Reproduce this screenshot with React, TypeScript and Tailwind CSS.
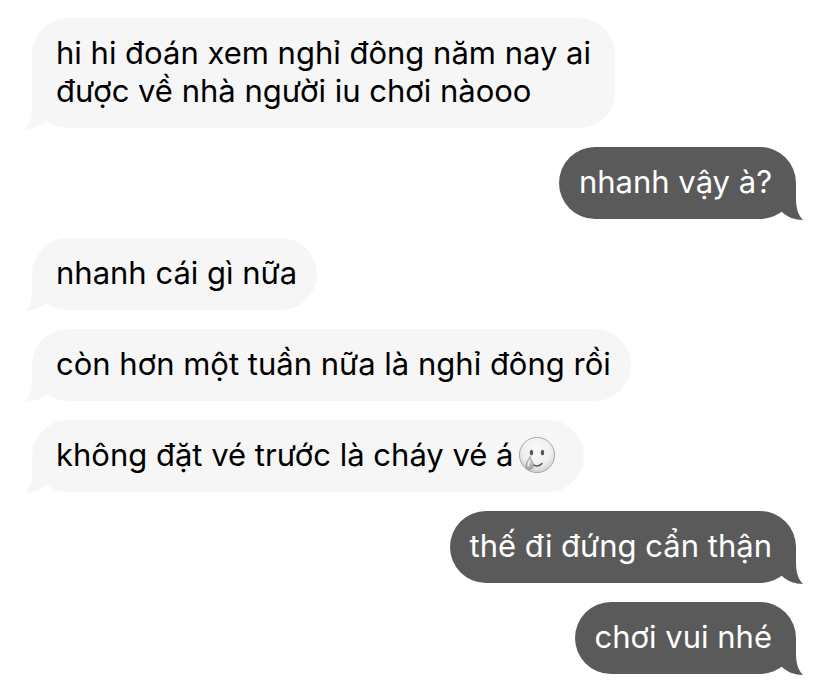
import type { ReactNode } from "react";

type Side = "left" | "right";

function Tail({ side }: { side: Side }) {
  return (
    <svg
      aria-hidden="true"
      viewBox="0 0 44 37"
      className={
        side === "left"
          ? "absolute -left-2 -bottom-px h-[37px] w-11 -scale-x-100 text-[#f6f6f6]"
          : "absolute -right-2 -bottom-px h-[37px] w-11 text-[#5a5a5a]"
      }
    >
      <path
        fill="currentColor"
        d="M14 0H36V15C36 25 38 32 43 37C35 37 27 34 22 29L14 20Z"
      />
    </svg>
  );
}

function Bubble({ side, children }: { side: Side; children: ReactNode }) {
  return (
    <li
      className={
        side === "left"
          ? "relative max-w-full self-start rounded-[36px] bg-[#f6f6f6] pt-4 pb-[18px] pl-6 pr-5 text-black"
          : "relative max-w-full self-end rounded-[36px] bg-[#5a5a5a] pt-4 pb-[18px] pl-5 pr-6 text-white"
      }
    >
      <Tail side={side} />
      <p className="relative">{children}</p>
    </li>
  );
}

function TearFace() {
  return (
    <svg
      role="img"
      aria-label="smiling face with tear"
      viewBox="0 0 38 38"
      className="mr-2 size-[38px] shrink-0"
    >
      <defs>
        <radialGradient id="face" cx="50%" cy="38%" r="62%">
          <stop offset="0" stopColor="#fbfbfb" />
          <stop offset="0.65" stopColor="#efefef" />
          <stop offset="1" stopColor="#cfcfcf" />
        </radialGradient>
        <linearGradient id="tear" x1="0" y1="0" x2="0" y2="1">
          <stop offset="0" stopColor="#e2e2e2" />
          <stop offset="1" stopColor="#a2a2a2" />
        </linearGradient>
      </defs>
      <circle cx="19" cy="19" r="17.6" fill="url(#face)" stroke="#989898" strokeWidth="0.8" />
      <ellipse cx="13.5" cy="16.5" rx="1.7" ry="2.8" fill="#555" />
      <ellipse cx="24.5" cy="16.5" rx="1.7" ry="2.8" fill="#555" />
      <path d="M14 27.5C17 31 21.5 30.5 24 27.5" fill="none" stroke="#555" strokeWidth="1.5" strokeLinecap="round" />
      <path
        d="M12 20.5C10.5 24 7.5 27 7.8 30C8.2 33 10.5 34 12.3 33.5C15 33 16 30.5 15 27.5C14.2 25 12.8 23.5 12 20.5Z"
        fill="url(#tear)"
        stroke="#909090"
        strokeWidth="0.8"
      />
      <path d="M11.6 25C10.6 27 9.8 28.5 10.2 30" fill="none" stroke="#fff" strokeWidth="1.2" strokeLinecap="round" />
    </svg>
  );
}

export default function App() {
  return (
    <main className="min-h-screen bg-white px-8 py-[18px] font-['Inter','Noto_Sans',sans-serif] text-[31px] leading-[38px]">
      <ol className="flex flex-col gap-[19px]">
        <Bubble side="left">
          <span className="block pr-1">
            hi hi đoán xem nghỉ đông năm nay ai
            <br />
            được về nhà người iu chơi nàooo
          </span>
        </Bubble>
        <Bubble side="right">nhanh vậy à?</Bubble>
        <Bubble side="left">nhanh cái gì nữa</Bubble>
        <Bubble side="left">còn hơn một tuần nữa là nghỉ đông rồi</Bubble>
        <Bubble side="left">
          <span className="flex items-center gap-1">
            <span>không đặt vé trước là cháy vé á</span>
            <TearFace />
          </span>
        </Bubble>
        <Bubble side="right">thế đi đứng cẩn thận</Bubble>
        <Bubble side="right">chơi vui nhé</Bubble>
      </ol>
    </main>
  );
}
